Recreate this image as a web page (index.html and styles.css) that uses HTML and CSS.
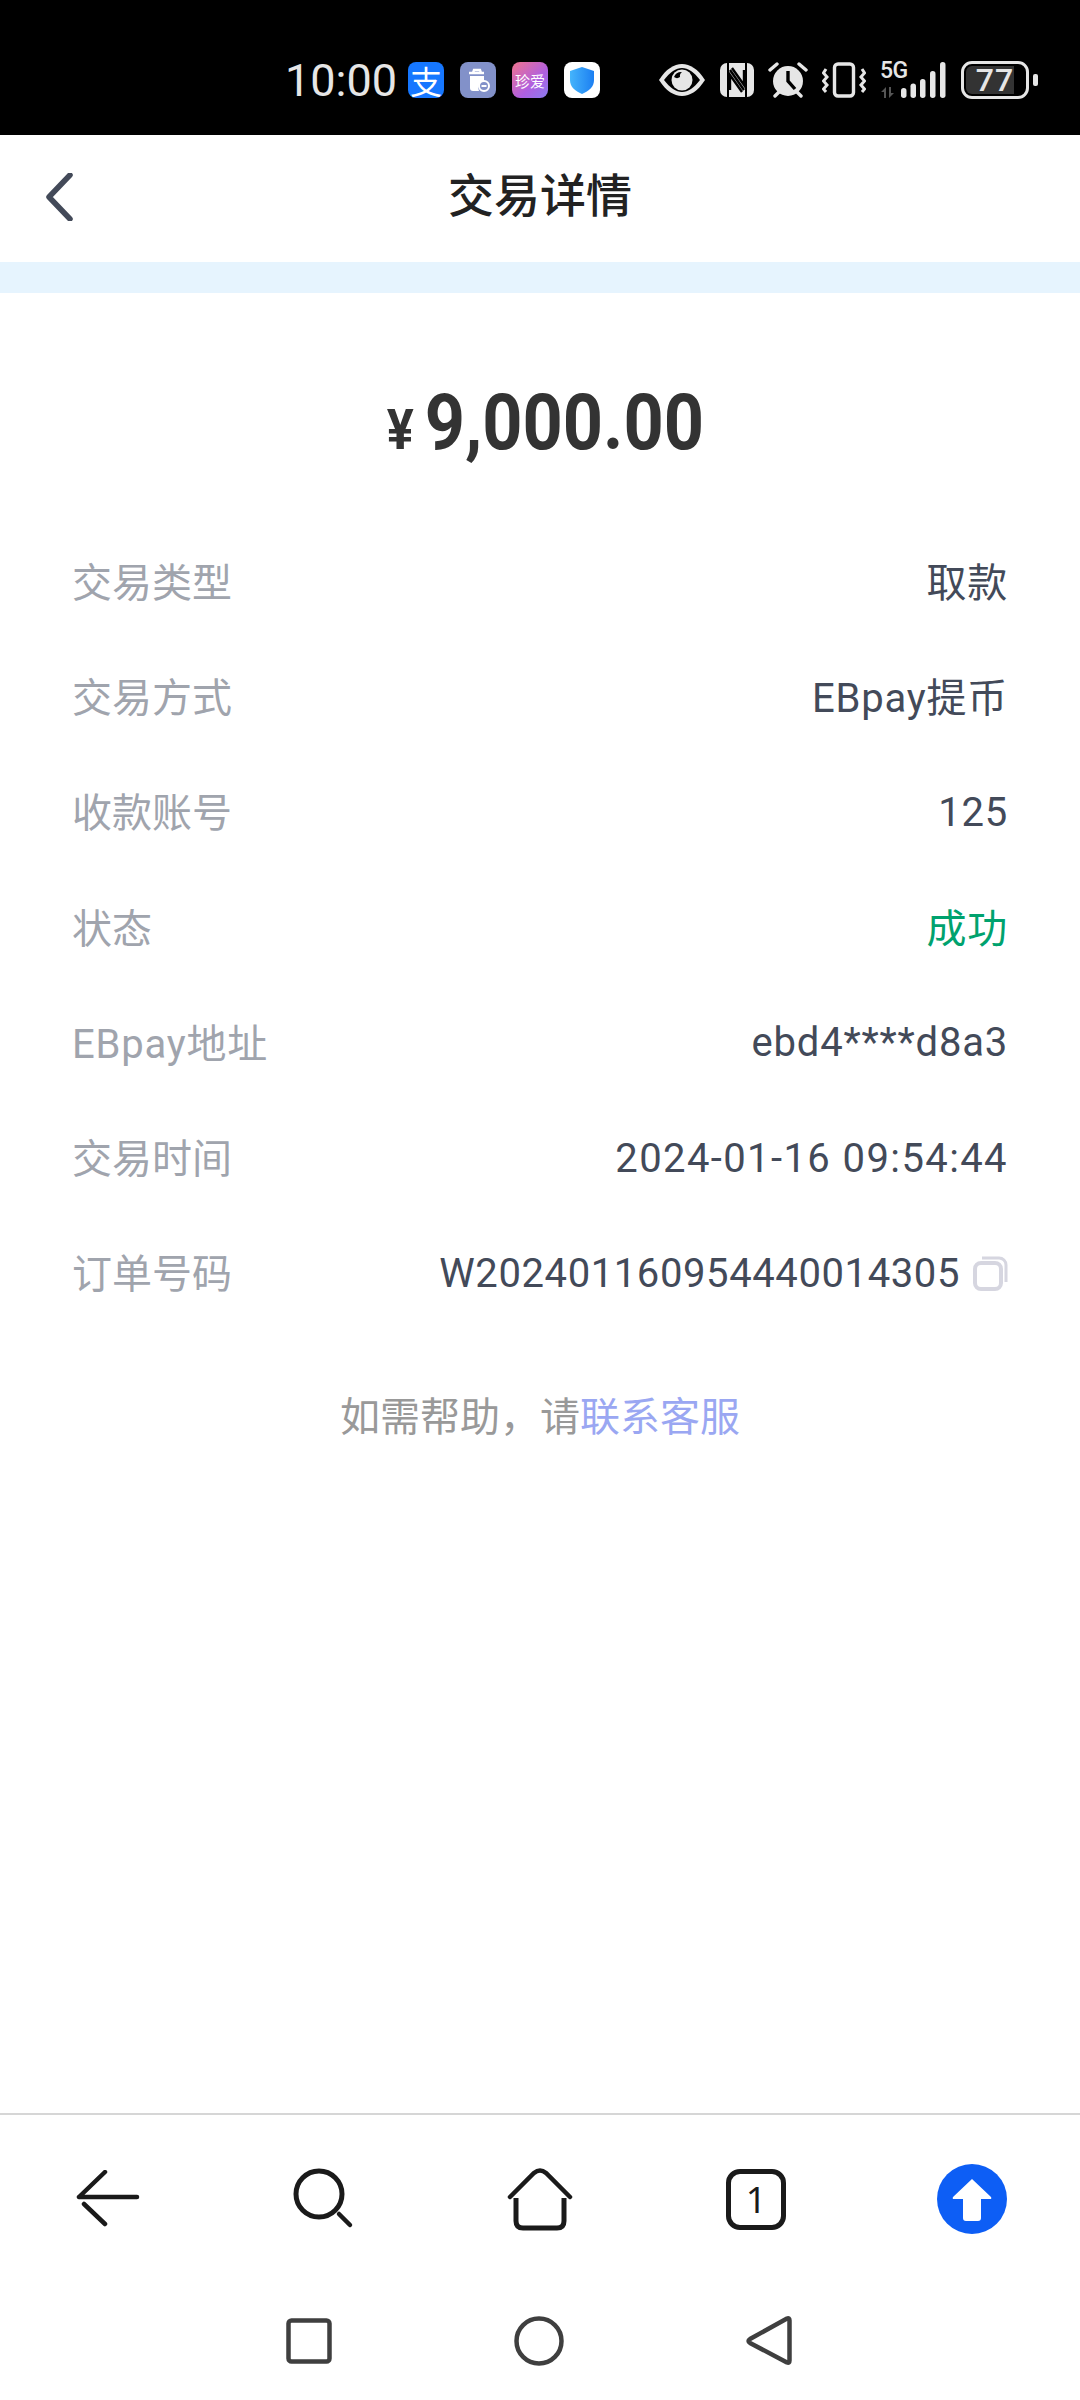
FILE: index.html
```
<!DOCTYPE html>
<html lang="zh">
<head>
<meta charset="utf-8">
<title>交易详情</title>
<link rel="stylesheet" href="styles.css">
</head>
<body>
<div class="page">
  <div class="statusbar">
    <span class="time">10:00</span>
    <span class="tile tile-ali">支</span>
    <span class="tile tile-clean">
      <svg width="36" height="36" viewBox="0 0 36 36"><path d="M9 11h15M13 11l1-3h6l1 3" fill="none" stroke="#fff" stroke-width="2.4"/><path d="M10 14h14v5a7 7 0 0 0-5 10h-6a3 3 0 0 1-3-3z" fill="#fff"/><circle cx="24" cy="24" r="5" fill="none" stroke="#fff" stroke-width="2"/><path d="M21.500 24h5" stroke="#fff" stroke-width="2"/></svg>
    </span>
    <span class="tile tile-love">珍爱</span>
    <span class="tile tile-shield">
      <svg width="36" height="36" viewBox="0 0 36 36"><defs><linearGradient id="sh" x1="0" y1="0" x2="1" y2="0"><stop offset="0" stop-color="#45b4fb"/><stop offset="1" stop-color="#1c7ff2"/></linearGradient></defs><path d="M18 5l12 4v9c0 7-5 11-12 14C11 29 6 25 6 18V9z" fill="url(#sh)"/></svg>
    </span>
    <span class="status-right">
      <svg width="48" height="36" viewBox="0 0 48 36"><path d="M1 18C8 7 16 2 24 2s16 5 23 16c-7 11-15 16-23 16S8 29 1 18z" fill="#e6e6e6"/><path d="M6 18C12 10 18 6 24 6s12 4 18 12c-6 8-12 12-18 12S12 26 6 18z" fill="#000"/><circle cx="24" cy="18" r="10.500" fill="#e6e6e6"/><path d="M16 15a8 8 0 0 1 8-5 5 5 0 0 0-2 5 5 5 0 0 1-6 0z" fill="#000"/></svg>
      <svg width="34" height="36" viewBox="0 0 34 36"><rect y="1" width="34" height="34" rx="7" fill="#e6e6e6"/><path d="M8 1v34M26 1v34" stroke="#000" stroke-width="2"/><path d="M10 8l14 20M10 28V13l12 17M24 8v15L12 6" fill="none" stroke="#000" stroke-width="2.400"/></svg>
      <svg width="40" height="36" viewBox="0 0 40 36"><circle cx="20" cy="19" r="15" fill="#e6e6e6"/><path d="M20 9v10l7 8" fill="none" stroke="#000" stroke-width="3.400"/><path d="M2 8l7-6M38 8l-7-6M7 34l4-4M33 34l-4-4" stroke="#e6e6e6" stroke-width="3.400" stroke-linecap="round"/></svg>
      <svg width="44" height="36" viewBox="0 0 44 36"><rect x="12.500" y="2" width="19" height="32" rx="3.500" fill="none" stroke="#e6e6e6" stroke-width="3.400"/><path d="M4 7L1.500 11 5 15 1.500 19 5 23 1.500 27 4 30M40 7l2.500 4L39 15l3.500 4L39 23l3.500 4L40 30" fill="none" stroke="#e6e6e6" stroke-width="3"/></svg>
      <span class="signal">
        <span class="fiveg">5G</span>
        <svg class="bars" width="67" height="36" viewBox="0 0 67 36"><path d="M1 30l5-5v11H4v-6zM9 25v11l5-5h-3v-6z" fill="#555"/><rect x="21" y="26" width="5.500" height="10" rx="2.700" fill="#e6e6e6"/><rect x="30.500" y="21.500" width="5.500" height="14.500" rx="2.700" fill="#e6e6e6"/><rect x="40" y="17" width="5.500" height="19" rx="2.700" fill="#e6e6e6"/><rect x="50" y="9" width="5.500" height="27" rx="2.700" fill="#e6e6e6"/><rect x="60" y="0" width="5.500" height="36" rx="2.700" fill="#e6e6e6"/></svg>
      </span>
      <span class="battery"><span class="battery-fill"></span><span class="battery-num">77</span></span>
      <span class="battery-tip"></span>
    </span>
  </div>

  <header class="navbar">
    <svg class="nav-back" width="28" height="48" viewBox="0 0 28 48"><path d="M25 2L4 24l21 22" fill="none" stroke="#434a59" stroke-width="5.500" stroke-linecap="round" stroke-linejoin="round"/></svg>
    <h1 class="nav-title">交易详情</h1>
  </header>
  <div class="band"></div>

  <main class="content">
    <div class="amount"><span class="amount-cur">¥</span><span class="amount-num">9,000.00</span></div>
    <dl class="rows">
      <div class="row"><dt>交易类型</dt><dd class="cjk">取款</dd></div>
      <div class="row"><dt>交易方式</dt><dd class="cjk">EBpay提币</dd></div>
      <div class="row"><dt>收款账号</dt><dd>125</dd></div>
      <div class="row"><dt>状态</dt><dd class="cjk ok">成功</dd></div>
      <div class="row"><dt class="wide">EBpay地址</dt><dd>ebd4****d8a3</dd></div>
      <div class="row"><dt>交易时间</dt><dd class="date">2024-01-16 09:54:44</dd></div>
      <div class="row"><dt>订单号码</dt><dd class="order">W202401160954440014305<svg class="copy" width="35" height="36" viewBox="0 0 35 36"><path d="M9 3h17a7 7 0 0 1 7 7v17" fill="none" stroke="#d6d6e0" stroke-width="3"/><rect x="2" y="8" width="26" height="26" rx="6" fill="#fff" stroke="#d6d6e0" stroke-width="4"/></svg></dd></div>
    </dl>
    <p class="help">如需帮助，请<a class="help-link">联系客服</a></p>
  </main>

  <nav class="toolbar">
    <span class="tool"><svg width="64" height="58" viewBox="0 0 64 58"><path d="M3 27h58M3 27L29 2M8 34l21 20" fill="none" stroke="#1a1a1a" stroke-width="4.500" stroke-linecap="round"/></svg></span>
    <span class="tool"><svg width="64" height="64" viewBox="0 0 64 64"><circle cx="27" cy="27" r="23" fill="none" stroke="#1a1a1a" stroke-width="5"/><path d="M47 47l11 11" stroke="#1a1a1a" stroke-width="4.500" stroke-linecap="round"/></svg></span>
    <span class="tool"><svg width="66" height="64" viewBox="0 0 66 64"><path d="M3 30L27 6q6-5 12 0l24 24" fill="none" stroke="#1a1a1a" stroke-width="4.500" stroke-linecap="round"/><path d="M9 31v23q0 7 7 7h34q7 0 7-7V31" fill="none" stroke="#1a1a1a" stroke-width="5"/></svg></span>
    <span class="tool"><span class="tab-count">1</span></span>
    <span class="tool"><svg width="70" height="70" viewBox="0 0 70 70"><circle cx="35" cy="35" r="35" fill="#0d5ef5"/><path d="M35 15L54 33q1 2-1 2H44v19q0 3-3 3H29q-3 0-3-3V35H17q-2 0-1-2z" fill="#fff"/></svg></span>
  </nav>
  <div class="sysnav">
    <span class="sys"><svg width="46" height="46" viewBox="0 0 46 46"><rect x="2.500" y="2.500" width="41" height="41" rx="3" fill="none" stroke="#3f3f3f" stroke-width="4.500"/></svg></span>
    <span class="sys"><svg width="50" height="50" viewBox="0 0 50 50"><circle cx="25" cy="25" r="22.500" fill="none" stroke="#3f3f3f" stroke-width="4.500"/></svg></span>
    <span class="sys"><svg width="46" height="52" viewBox="0 0 46 52"><path d="M41 3.500q2.500-1 2.500 2v40q0 3-2.500 2L4 28q-3-2 0-4z" fill="none" stroke="#3f3f3f" stroke-width="4.500" stroke-linejoin="round"/></svg></span>
  </div>
</div>
</body>
</html>
```
FILE: styles.css
```
* { box-sizing: border-box; }
html, body { margin: 0; padding: 0; background: #fff; }
body { font-family: "Roboto", "Noto Sans CJK SC", sans-serif; }
.page { width: 1080px; height: 2400px; display: flex; flex-direction: column; overflow: hidden; }

.statusbar { height: 135px; background: #000; color: #e6e6e6; display: flex; align-items: center; padding: 25px 0 0 285px; flex: none; }
.time { font-size: 45px; width: 123px; line-height: 1; font-family: "Roboto", sans-serif; }
.tile { width: 36px; height: 36px; border-radius: 8px; margin-right: 16px; display: flex; align-items: center; justify-content: center; color: #fff; line-height: 1; font-family: "Noto Sans CJK SC", sans-serif; flex: none; }
.tile-ali { background: #1677ff; font-size: 32px; }
.tile-clean { background: #8291c9; }
.tile-love { background: linear-gradient(135deg, #f0748f, #b05fe0 60%, #8a7cf0); font-size: 15px; }
.tile-shield { background: #fff; }
.status-right { display: flex; align-items: center; margin-left: 42px; gap: 14px; }
.signal { position: relative; display: block; width: 67px; height: 36px; }
.bars { display: block; }
.fiveg { position: absolute; left: 0; top: -3px; font-size: 23px; font-weight: 500; font-family: "Roboto", sans-serif; line-height: 24px; letter-spacing: -0.5px; color: #e6e6e6; }
.battery { position: relative; width: 68px; height: 38px; border: 3px solid #e6e6e6; border-radius: 11px; overflow: hidden; display: flex; align-items: center; justify-content: center; }
.battery-fill { position: absolute; left: 2px; top: 2px; bottom: 2px; width: 48px; background: #333; border-radius: 6px 0 0 6px; }
.battery-num { position: relative; font-size: 32px; font-weight: 500; letter-spacing: 1px; color: #e6e6e6; line-height: 1; font-family: "Roboto", sans-serif; }
.battery-tip { width: 5px; height: 12px; background: #e6e6e6; border-radius: 2px; margin-left: -10px; }

.navbar { height: 127px; position: relative; display: flex; align-items: center; justify-content: center; padding-bottom: 14px; flex: none; }
.nav-back { position: absolute; left: 45px; top: 38px; }
.nav-title { margin: 0; font-size: 46px; font-weight: 500; color: #222; font-family: "Noto Sans CJK SC", sans-serif; line-height: 1; }
.band { height: 31px; background: #e6f4fe; flex: none; }

.content { flex: 1; }
.amount { height: 231px; padding: 90px 0 0 12px; display: flex; justify-content: center; align-items: baseline; color: #333; font-family: "Roboto", sans-serif; font-weight: 700; transform: scaleX(0.9); }
.amount-cur { font-size: 56px; margin-right: 12px; }
.amount-num { font-size: 78px; line-height: 80px; }

.rows { margin: 0; padding: 0 72px 0 72px; }
.row { height: 115.300px; display: flex; align-items: center; justify-content: space-between; font-size: 40px; }
.row dt { color: #a0a4ad; letter-spacing: 0; margin-top: -4px; }
.row dt.wide { letter-spacing: 0.800px; }
.row dd { margin: 0; color: #434a59; letter-spacing: 0.800px; display: flex; align-items: center; }
.row dd.cjk { margin-top: -3px; }
.row dd.ok { color: #00a26e; }
.row dd.date { letter-spacing: 1.400px; }
.row dd.order { gap: 13px; letter-spacing: 0.600px; }
.copy { flex: none; }

.help { margin: 55px 0 0; text-align: center; font-size: 40px; line-height: 56px; color: #999; font-family: "Noto Sans CJK SC", sans-serif; }
.help-link { color: #9aa7f2; }

.toolbar { height: 170px; border-top: 2px solid #d6d6d6; display: grid; grid-template-columns: repeat(5, 216px); flex: none; }
.tool { display: flex; align-items: center; justify-content: center; }
.tab-count { width: 60px; height: 61px; border: 5px solid #1a1a1a; border-radius: 14px; display: flex; align-items: center; justify-content: center; font-size: 36px; color: #1a1a1a; font-family: "Noto Sans", sans-serif; }

.sysnav { height: 117px; padding: 0 2px 2px 0; display: flex; justify-content: center; flex: none; }
.sys { width: 230px; display: flex; align-items: center; justify-content: center; }
```
